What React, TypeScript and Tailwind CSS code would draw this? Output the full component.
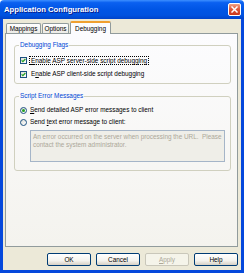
import React from 'react';

const font = "font-['Liberation_Sans',Tahoma,Arial,sans-serif]";

function CloseButton() {
  return (
    <div className="w-[13px] h-[13px] rounded-[2px] border border-white flex items-center justify-center bg-[linear-gradient(180deg,#f0a487_0%,#e0593b_45%,#c8361b_100%)]">
      <svg width="7" height="7" viewBox="0 0 7 7">
        <path d="M1 1 L6 6 M6 1 L1 6" stroke="#fff" strokeWidth="1.5" strokeLinecap="square" />
      </svg>
    </div>
  );
}

function Checkbox() {
  return (
    <div className="w-[7px] h-[7px] shrink-0 border border-[#1c5180] bg-[linear-gradient(135deg,#dcdcd7_0%,#ffffff_100%)] flex items-center justify-center">
      <svg width="5" height="5" viewBox="0 0 5 5">
        <path d="M0.6 2.4 L1.9 3.7 L4.4 1" stroke="#21a121" strokeWidth="1.2" fill="none" />
      </svg>
    </div>
  );
}

function Radio({ checked }: { checked?: boolean }) {
  return (
    <div className="w-[7px] h-[7px] shrink-0 rounded-full border border-[#1c5180] bg-[linear-gradient(135deg,#dcdcd7_0%,#ffffff_100%)] flex items-center justify-center">
      {checked && <div className="w-[3px] h-[3px] rounded-full bg-[#21a121]" />}
    </div>
  );
}

function Btn({ children, disabled }: { children: React.ReactNode; disabled?: boolean }) {
  return (
    <div
      className={
        disabled
          ? 'w-[44px] h-[13px] rounded-[2px] border border-[#c9c7ba] bg-[#f5f4ea] text-[#aca899] flex items-center justify-center'
          : 'w-[44px] h-[13px] rounded-[2px] border border-[#003c74] bg-[linear-gradient(180deg,#ffffff_0%,#f4f3ee_60%,#d6d0c5_100%)] flex items-center justify-center'
      }
    >
      {children}
    </div>
  );
}

export default function App() {
  return (
    <div className={`w-[244px] h-[273px] flex flex-col bg-white ${font} text-[6.4px] leading-[8px] text-black`}>
      {/* Title bar */}
      <div className="h-[19px] shrink-0 flex items-center justify-between pl-[4px] pr-[3px] rounded-t-[4px] bg-[linear-gradient(180deg,#3d8fff_0%,#0a60f0_14%,#0055e5_50%,#0052e0_80%,#0043c9_100%)]">
        <span className="text-white font-bold text-[7.7px] leading-[10px] [text-shadow:1px_1px_0_#0a1c8a]">
          Application Configuration
        </span>
        <CloseButton />
      </div>

      <div className="flex-1 flex flex-col border-x-[3px] border-b-[3px] border-[#0548dc] bg-[#ece9d8] pl-[2px] pr-[3px]">
        {/* Tabs */}
        <div className="h-[12px] mt-[2px] flex items-end pl-[1px]">
          <div className="w-[35px] h-[10px] border border-b-0 border-[#919b9c] rounded-t-[2px] bg-[linear-gradient(180deg,#ffffff_0%,#ecebe6_100%)] flex items-center justify-center">
            Mappings
          </div>
          <div className="w-[27px] h-[10px] ml-[1px] border border-b-0 border-[#919b9c] rounded-t-[2px] bg-[linear-gradient(180deg,#ffffff_0%,#ecebe6_100%)] flex items-center justify-center">
            Options
          </div>
          <div className="relative z-10 w-[41px] h-[13px] -mb-[1px] ml-[1px] border-x border-[#919b9c] border-t-2 border-t-[#f0a030] rounded-t-[2px] bg-[#fcfcfe] flex items-center justify-center">
            Debugging
          </div>
        </div>

        {/* Panel */}
        <div className="flex-1 flex flex-col border border-[#919b9c] bg-[linear-gradient(180deg,#fcfcfe_0%,#f4f3ee_100%)] pl-[8px] pr-[6px]">
          <fieldset className="mt-[7px] border border-[#d0d0bf] rounded-[3px] pl-[5px] pt-[7px] pb-[5px]">
            <legend className="-ml-[1px] px-[1px] text-[#0046d5] leading-[8px]">Debugging Flags</legend>
            <div className="flex items-center h-[8px]">
              <Checkbox />
              <span className="ml-[2px] px-[1px] h-[9px] flex items-center border border-dotted border-black leading-[7px]">
                <span>
                  <span className="underline">E</span>nable ASP server-side script debugging
                </span>
              </span>
            </div>
            <div className="flex items-center h-[8px] mt-[6px]">
              <Checkbox />
              <span className="ml-[3px] px-[1px]">
                E<span className="underline">n</span>able ASP client-side script debugging
              </span>
            </div>
          </fieldset>

          <fieldset className="mt-[8px] border border-[#d0d0bf] rounded-[3px] pl-[5px] pr-[5px] pt-[6px] pb-[8px]">
            <legend className="-ml-[1px] px-[1px] text-[#0046d5] leading-[8px]">Script Error Messages</legend>
            <div className="flex items-center h-[8px]">
              <Radio checked />
              <span className="ml-[3px]">
                <span className="underline">S</span>end detailed ASP error messages to client
              </span>
            </div>
            <div className="flex items-center h-[8px] mt-[4px]">
              <Radio />
              <span className="ml-[3px]">
                Send <span className="underline">t</span>ext error message to client:
              </span>
            </div>
            <div className="mt-[4px] ml-[10px] h-[32px] border border-[#a5b5c8] bg-[#efeee8] pl-[2px] pt-[2px] text-[#aca899] whitespace-pre">
              <div>An error occurred on the server when processing the URL.  Please</div>
              <div>contact the system administrator.</div>
            </div>
          </fieldset>
        </div>

        {/* Buttons */}
        <div className="h-[13px] mt-[6px] mb-[4px] flex justify-end gap-[5px]">
          <Btn>OK</Btn>
          <Btn>Cancel</Btn>
          <Btn disabled>
            <span className="underline">A</span>pply
          </Btn>
          <Btn>Help</Btn>
        </div>
      </div>
    </div>
  );
}
